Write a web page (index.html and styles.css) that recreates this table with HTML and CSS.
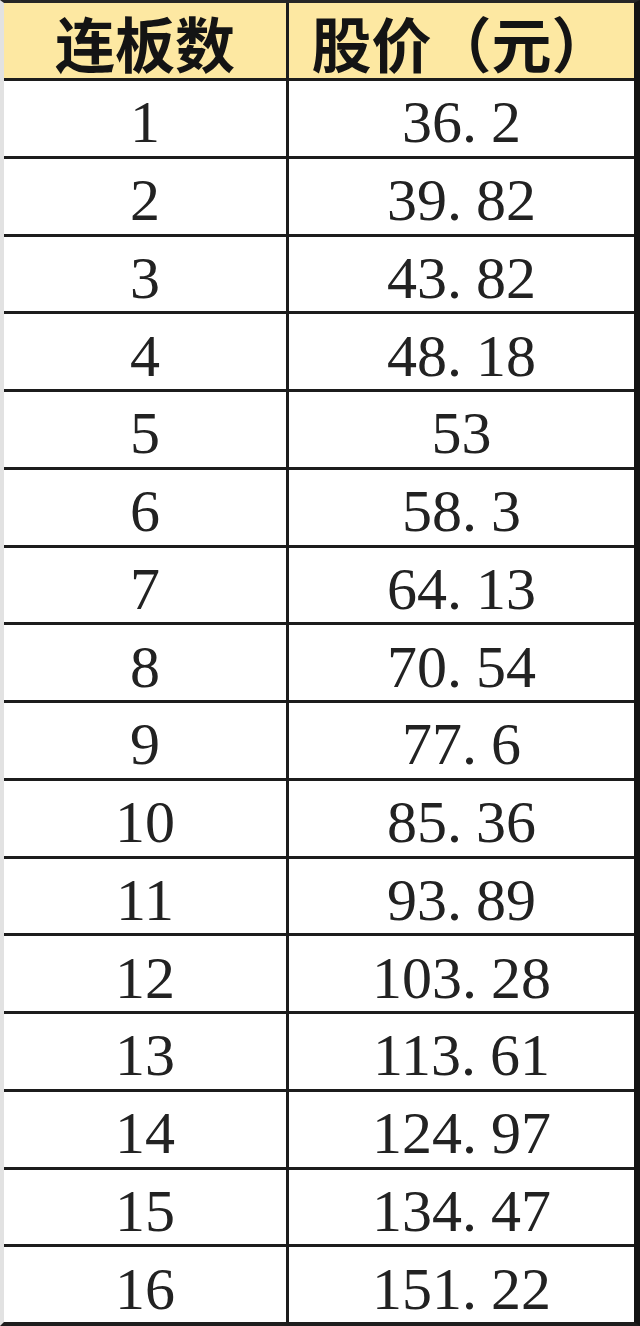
FILE: index.html
```html
<!DOCTYPE html>
<html lang="zh">
<head>
<meta charset="utf-8">
<title>连板数 股价</title>
<link rel="stylesheet" href="styles.css">
</head>
<body>
<div class="sheet">
  <div class="grid">
    <div class="cell head">连板数</div>
    <div class="cell head">股价（元）</div>
    <div class="cell num">1</div><div class="cell num">36<span class="pt">.</span>2</div>
    <div class="cell num">2</div><div class="cell num">39<span class="pt">.</span>82</div>
    <div class="cell num">3</div><div class="cell num">43<span class="pt">.</span>82</div>
    <div class="cell num">4</div><div class="cell num">48<span class="pt">.</span>18</div>
    <div class="cell num">5</div><div class="cell num">53</div>
    <div class="cell num">6</div><div class="cell num">58<span class="pt">.</span>3</div>
    <div class="cell num">7</div><div class="cell num">64<span class="pt">.</span>13</div>
    <div class="cell num">8</div><div class="cell num">70<span class="pt">.</span>54</div>
    <div class="cell num">9</div><div class="cell num">77<span class="pt">.</span>6</div>
    <div class="cell num">10</div><div class="cell num">85<span class="pt">.</span>36</div>
    <div class="cell num">11</div><div class="cell num">93<span class="pt">.</span>89</div>
    <div class="cell num">12</div><div class="cell num">103<span class="pt">.</span>28</div>
    <div class="cell num">13</div><div class="cell num">113<span class="pt">.</span>61</div>
    <div class="cell num">14</div><div class="cell num">124<span class="pt">.</span>97</div>
    <div class="cell num">15</div><div class="cell num">134<span class="pt">.</span>47</div>
    <div class="cell num">16</div><div class="cell num">151<span class="pt">.</span>22</div>
  </div>
</div>
</body>
</html>
```

FILE: styles.css
```css
html, body {
  margin: 0;
  padding: 0;
  background: #ffffff;
}

.sheet {
  width: 640px;
  height: 1326px;
  box-sizing: border-box;
  border-left: 4px solid #e2e2e2;
  border-right: 6px solid #141414;
  border-top: 3px solid #262626;
  border-bottom: 4px solid #1e1e1e;
}

.grid {
  display: grid;
  height: 100%;
  grid-template-columns: 282px 1fr;
  grid-template-rows: 75px repeat(16, 1fr);
  gap: 3px;
  background: #1c1c1c;
}

.cell {
  display: flex;
  align-items: center;
  justify-content: center;
  background: #ffffff;
  line-height: 1;
  box-sizing: border-box;
}

.head {
  background: #fde8a2;
  font-family: "Noto Sans CJK SC", "Noto Sans", sans-serif;
  font-weight: 700;
  font-size: 60px;
  color: #141414;
  padding-top: 2px;
}

.num {
  font-family: "Liberation Serif", "DejaVu Serif", serif;
  font-size: 60px;
  color: #222222;
  padding-top: 8px;
}

.pt {
  margin-right: 14px;
}
```
